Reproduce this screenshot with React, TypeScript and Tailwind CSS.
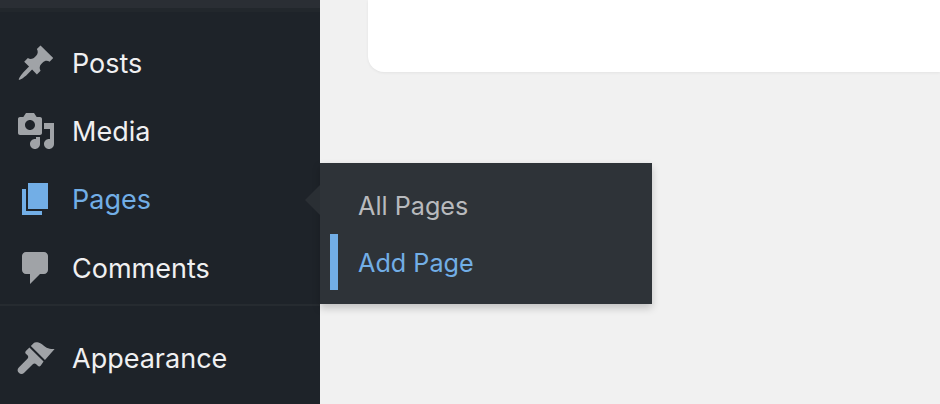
const posts = "M10.44 3.02l1.82-1.82 6.36 6.35-1.83 1.82c-1.05-.68-2.48-.57-3.41.36l-.75.75c-.92.93-1.04 2.35-.35 3.41l-1.83 1.82-2.41-2.41-2.8 2.79c-.42.42-3.38 2.71-3.8 2.29s1.86-3.39 2.28-3.81l2.79-2.79L4.1 9.36l1.83-1.82c1.05.69 2.48.57 3.4-.36l.75-.75c.93-.92 1.05-2.35.36-3.41z";
const media = "M13 11V4c0-.55-.45-1-1-1h-1.67L9 1H5L3.67 3H2c-.55 0-1 .45-1 1v7c0 .55.45 1 1 1h10c.55 0 1-.45 1-1zM7 4.5c1.38 0 2.5 1.12 2.5 2.5S8.38 9.5 7 9.5 4.5 8.38 4.5 7 5.62 4.5 7 4.5zM14 6h5v10.5c0 1.38-1.12 2.5-2.5 2.5S14 17.88 14 16.5s1.12-2.5 2.5-2.5c.17 0 .34.02.5.05V9h-3V6zm-4 8.05V13h2v3.5c0 1.38-1.12 2.5-2.5 2.5S7 17.88 7 16.5 8.12 14 9.5 14c.17 0 .34.02.5.05z";
const pages = "M6 15V2h10v13H6zm-1 1h8v2H3V5h2v11z";
const comments = "M5 2h9c1.1 0 2 .9 2 2v7c0 1.1-.9 2-2 2h-2l-5 5v-5H5c-1.1 0-2-.9-2-2V4c0-1.1.9-2 2-2z";
const appearance = "M14.48 11.06L7.41 3.99l1.5-1.5c.5-.56 2.3-.47 3.51.32 1.21.8 1.43 1.28 2.91 2.1 1.3.6 2.7.7 3.97.59l-4.82 5.56zm-.71.71L6.7 4.7 4.93 6.47c-.39.39-.39 1.02 0 1.41l.8.8c.5.5.5 1.2 0 1.7L1.4 14.7c-.8.8-.8 1.9 0 2.7.8.8 1.9.8 2.7 0l4.3-4.3c.5-.5 1.2-.5 1.7 0l.8.8c.39.39 1.02.39 1.41 0z";

function Row({ d, label, active = false }: { d: string; label: string; active?: boolean }) {
  return (
    <div className={`flex h-[68px] items-center pl-4 ${active ? "text-[#72aee6]" : "text-[#f0f0f1]"}`}>
      <svg viewBox="0 0 20 20" className={`h-10 w-10 shrink-0 ${active ? "fill-[#72aee6]" : "fill-[#a0a3a7]"}`}>
        <path d={d} />
      </svg>
      <span className="ml-4 text-[27px] font-[430] leading-none">{label}</span>
    </div>
  );
}

export default function App() {
  return (
    <div className="relative flex h-[404px] w-[940px] overflow-hidden bg-[#f1f1f1] font-['Inter',sans-serif]">
      <aside className="w-[320px] shrink-0 bg-[#1e2329]">
        <div className="h-[8px] bg-[#2a2e34]" />
        <div className="h-[4px] bg-[#22272c]" />
        <div className="pt-[17px]">
          <Row d={posts} label="Posts" />
          <Row d={media} label="Media" />
          <Row d={pages} label="Pages" active />
          <div className="mt-px">
            <Row d={comments} label="Comments" />
          </div>
        </div>
        <div className="mt-[2px] h-[2px] bg-[#262b30]" />
        <div className="mt-[18px]">
          <Row d={appearance} label="Appearance" />
        </div>
      </aside>
      <main className="flex-1">
        <div className="ml-12 h-[72px] rounded-bl-2xl bg-white shadow-[0_1px_3px_rgba(0,0,0,0.06)]" />
      </main>

      <div className="absolute left-[320px] top-[163px] flex h-[141px] w-[332px] flex-col bg-[#2e3338] pt-[14px] shadow-[0_4px_8px_rgba(0,0,0,0.2)]">
        <div className="absolute left-[-15px] top-[22px] h-0 w-0 border-y-[15px] border-r-[15px] border-y-transparent border-r-[#2a2f34]" />
        <div className="flex h-[57px] items-center pl-[38px] pt-[2px] text-[25.2px] font-[430] leading-none text-[#b8babd]">All Pages</div>
        <div className="ml-[10px] flex h-[56px] items-center border-l-[8px] border-[#72aee6] pl-[20px] pt-[3px] text-[25.2px] font-[430] leading-none text-[#72aee6]">Add Page</div>
      </div>
    </div>
  );
}
